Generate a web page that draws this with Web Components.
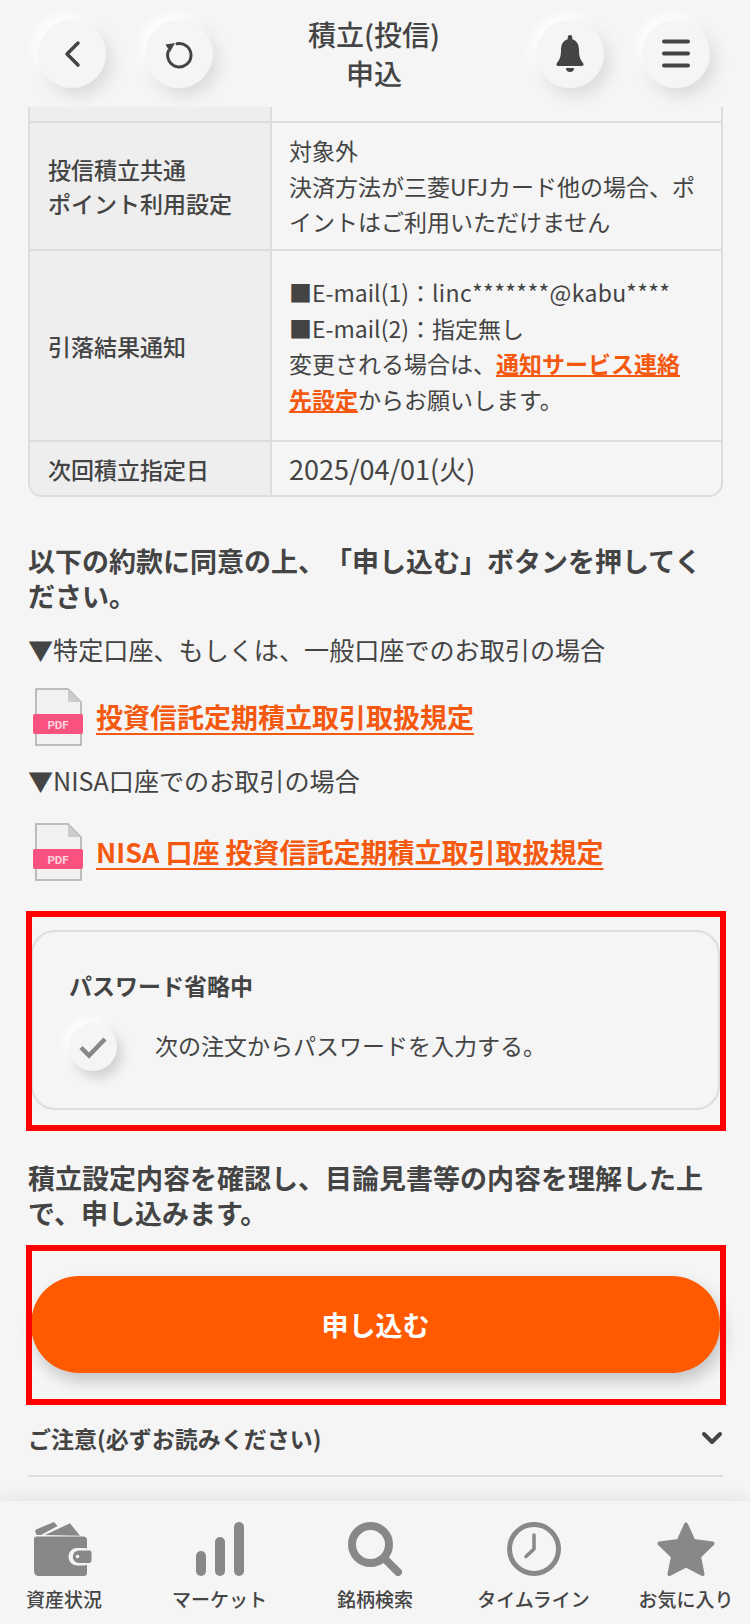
<!DOCTYPE html>
<html lang="ja">
<head>
<meta charset="utf-8">
<title>積立(投信) 申込</title>
<style>
    html, body {
        margin: 0;
        background: #f5f5f5;
    }
    body {
        font-family: "Noto Sans CJK JP", "Noto Sans", sans-serif;
        color: #444;
    }
    a {
        color: #f4590f;
        font-weight: 700;
    }
</style>
</head>
<body>
<app-screen>
    <app-header slot="header">
        <round-button slot="left" icon="back"></round-button>
        <round-button slot="left" icon="reload"></round-button>
        積立(投信)<br>申込
        <round-button slot="right" icon="bell"></round-button>
        <round-button slot="right" icon="menu"></round-button>
    </app-header>

    <info-table>
        <info-row stub></info-row>
        <info-row label="投信積立共通&#10;ポイント利用設定" height="128">
            対象外<br>決済方法が三菱UFJカード他の場合、ポイントはご利用いただけません
        </info-row>
        <info-row label="引落結果通知" height="191">
            ■E-mail(1)：<span style="letter-spacing:.35px">linc*******@kabu****</span><br>■E-mail(2)：指定無し<br>変更される場合は、<a href="#">通知サービス連絡先設定</a>からお願いします。
        </info-row>
        <info-row label="次回積立指定日" height="55" large>2025/04/01(火)</info-row>
    </info-table>

    <agree-text top="46">以下の約款に同意の上、「申し込む」ボタンを押してください。</agree-text>
    <plain-text top="18">▼特定口座、もしくは、一般口座でのお取引の場合</plain-text>
    <pdf-link top="21">投資信託定期積立取引取扱規定</pdf-link>
    <plain-text top="16">▼NISA口座でのお取引の場合</plain-text>
    <pdf-link top="25">NISA 口座 投資信託定期積立取引取扱規定</pdf-link>

    <red-frame top="30">
        <password-card></password-card>
    </red-frame>

    <agree-text top="29">積立設定内容を確認し、目論見書等の内容を理解した上で、申し込みます。</agree-text>

    <red-frame top="15">
        <submit-button>申し込む</submit-button>
    </red-frame>

    <notice-row>ご注意(必ずお読みください)</notice-row>

    <tab-bar slot="footer">
        <tab-item icon="wallet">資産状況</tab-item>
        <tab-item icon="chart">マーケット</tab-item>
        <tab-item icon="search">銘柄検索</tab-item>
        <tab-item icon="clock" style="padding-left:6px">タイムライン</tab-item>
        <tab-item icon="star">お気に入り</tab-item>
    </tab-bar>
</app-screen>

<script>
const ICONS = {
    back: `<svg width="18" height="28" viewBox="0 0 18 28"><path d="M15 3 4 14l11 11" fill="none" stroke="#444" stroke-width="3.5" stroke-linecap="round" stroke-linejoin="round"/></svg>`,
    reload: `<svg width="30" height="30" viewBox="0 0 30 30"><path d="M13 4.700A11.700 11.700 0 1 1 4.400 12" fill="none" stroke="#444" stroke-width="3" stroke-linecap="round"/><path d="M1.500 5.500 11 4 6 13z" fill="#444"/></svg>`,
    bell: `<svg width="30" height="38" viewBox="0 0 30 38"><path d="M15 0a2.300 2.300 0 0 1 2.300 2.300v1.900C22.600 5.700 24 10.500 24 15c0 7 1.500 10 4.200 13.300.9 1.200.2 2.700-1.200 2.700H3c-1.400 0-2.100-1.500-1.200-2.700C4.500 25 6 22 6 15c0-4.500 1.400-9.300 6.700-10.800V2.300A2.300 2.300 0 0 1 15 0z" fill="#444"/><path d="M11 33h8a4 4 0 0 1-8 0z" fill="#444"/></svg>`,
    menu: `<svg width="28" height="29" viewBox="0 0 28 29"><path d="M2 2.500h24M2 14.500h24M2 26.500h24" stroke="#444" stroke-width="4" stroke-linecap="round"/></svg>`,
    wallet: `<svg width="62" height="54" viewBox="0 0 62 54"><g fill="#888"><path d="M3 7.500 21 0l3.500 4L8 13H5C2.500 13 1.500 8.500 3 7.500z"/><path d="M12 13 37 1.300 47 13.700z"/><path d="M1 17c0-1.500 1-2.500 2.500-2.500h47C52.500 14.500 54 16 54 18v33c0 2-1.500 3-3 3H6c-3 0-5-2-5-5z"/></g><rect x="35.500" y="26" width="24" height="17.500" rx="8.500" fill="#f5f5f5"/><path d="M46 28.500h10.500c1.500 0 2 1 2 2.500v7c0 2-1 3-2.500 3H46a6.250 6.250 0 0 1 0-12.500z" fill="#888"/><circle cx="44.500" cy="34.500" r="1.800" fill="#f5f5f5"/></svg>`,
    chart: `<svg width="48" height="54" viewBox="0 0 48 54"><g fill="#888"><rect x="0" y="29" width="10" height="25" rx="5"/><rect x="19" y="15" width="10" height="39" rx="5"/><rect x="38" y="0" width="10" height="54" rx="5"/></g></svg>`,
    search: `<svg width="54" height="54" viewBox="0 0 54 54"><circle cx="22.500" cy="22.500" r="18.500" fill="none" stroke="#888" stroke-width="8"/><path d="M37 37 50 50" stroke="#888" stroke-width="8" stroke-linecap="round"/></svg>`,
    clock: `<svg width="54" height="54" viewBox="0 0 54 54"><circle cx="27" cy="27" r="24.500" fill="none" stroke="#888" stroke-width="5"/><path d="M27 13v14l-8 7.500" fill="none" stroke="#888" stroke-width="3.500" stroke-linecap="round" stroke-linejoin="round"/></svg>`,
    star: `<svg width="58" height="54" viewBox="0 0 58 54"><path d="M29 2.500 36.500 19 55.500 21.500 42 34.500 45.500 52 29 43.500 12.500 52 16 34.500 2.500 21.500 21.500 19z" fill="#888" stroke="#888" stroke-width="4" stroke-linejoin="round"/></svg>`,
};

// small helper, every element below does the same thing in its constructor
const shadow = (el, html) => {
    el.attachShadow({ mode: "open" }).innerHTML = html;
};

class AppScreen extends HTMLElement {
    constructor() {
        super();
        shadow(this, `
            <style>
                :host { display: flex; flex-direction: column; width: 750px; height: 1624px; overflow: hidden; }
                main { flex: 1; min-height: 0; overflow: hidden; padding: 0 27px 0 28px; }
            </style>
            <slot name="header"></slot>
            <main><slot></slot></main>
            <slot name="footer"></slot>`);
    }
}

class AppHeader extends HTMLElement {
    constructor() {
        super();
        shadow(this, `
            <style>
                :host { display: flex; align-items: center; height: 107px; box-sizing: border-box; padding: 0 40px 0 38px; flex: none; }
                .side { display: flex; gap: 39px; width: 175px; }
                .right { justify-content: flex-end; gap: 38px; }
                .title { flex: 1; text-align: center; font-size: 28px; font-weight: 500; line-height: 39px; color: #444; }
            </style>
            <div class="side"><slot name="left"></slot></div>
            <div class="title"><slot></slot></div>
            <div class="side right"><slot name="right"></slot></div>`);
    }
}

class RoundButton extends HTMLElement {
    constructor() {
        super();
        shadow(this, `
            <style>
                :host { display: grid; place-items: center; width: 68px; height: 68px; border-radius: 50%; background: #f5f5f5;
                    box-shadow: 6px 8px 16px rgba(0,0,0,.1), -5px -5px 12px #fff; }
                svg { display: block; }
            </style>
            ${ICONS[this.getAttribute("icon")]}`);
    }
}

class InfoTable extends HTMLElement {
    constructor() {
        super();
        shadow(this, `
            <style>
                :host { display: block; border: 2px solid #ddd; border-top: 0; border-radius: 0 0 14px 14px; overflow: hidden; }
            </style>
            <slot></slot>`);
    }
}

class InfoRow extends HTMLElement {
    constructor() {
        super();
        const label = this.getAttribute("label") || "";
        const height = this.hasAttribute("stub") ? 14 : this.getAttribute("height");
        shadow(this, `
            <style>
                :host { display: grid; grid-template-columns: 242px 1fr; border-top: 2px solid #ddd; min-height: ${height}px; font-size: 23px; line-height: 35.5px; box-sizing: border-box; }
                :host([stub]) { border-top: 0; }
                :host([large]) .value { font-size: 27px; }
                .label { background: #eee; border-right: 2px solid #ddd; display: flex; align-items: center; padding: 0 0 0 18px; font-weight: 500; white-space: pre-line; line-height: 34px; }
                .value { display: flex; align-items: center; padding: 1px 22px 0 17px; }
                ::slotted(a) { color: #f4590f; font-weight: 700; }
            </style>
            <div class="label">${label}</div>
            <div class="value"><div><slot></slot></div></div>`);
    }
}

class AgreeText extends HTMLElement {
    constructor() {
        super();
        shadow(this, `
            <style>
                :host { display: block; margin-top: ${this.getAttribute("top")}px; font-size: 27px; font-weight: 700; line-height: 35px; color: #444; text-spacing-trim: space-all; }
            </style>
            <slot></slot>`);
    }
}

class PlainText extends HTMLElement {
    constructor() {
        super();
        shadow(this, `
            <style>
                :host { display: block; margin-top: ${this.getAttribute("top")}px; font-size: 25.1px; line-height: 36px; color: #444; }
            </style>
            <slot></slot>`);
    }
}

class PdfLink extends HTMLElement {
    constructor() {
        super();
        shadow(this, `
            <style>
                :host { display: flex; align-items: center; gap: 12px; margin-top: ${this.getAttribute("top")}px; padding-left: 4px; height: 58px; }
                a { color: #f4590f; font-size: 27px; font-weight: 700; text-decoration: underline; text-decoration-thickness: 2px; text-underline-offset: 5px; line-height: 36px; }
                svg { display: block; flex: none; }
            </style>
            <svg width="52" height="58" viewBox="0 0 52 58">
                <path d="M4 1h32l13 13v43H4z" fill="#f1f1f1" stroke="#aaa" stroke-width="1.500"/>
                <path d="M36 1v13h13z" fill="#ccc"/>
                <rect x="1" y="26" width="50" height="20" rx="2" fill="#f9527f"/>
                <text x="26" y="41" text-anchor="middle" font-family="Roboto, sans-serif" font-size="11.500" font-weight="700" fill="#fbd5df">PDF</text>
            </svg>
            <a href="#"><slot></slot></a>`);
    }
}

class RedFrame extends HTMLElement {
    constructor() {
        super();
        shadow(this, `
            <style>
                :host { display: flow-root; position: relative; margin: ${this.getAttribute("top")}px -3px 0 -2px; padding: 0 6px; box-sizing: border-box; }
                :host::after { content: ""; position: absolute; inset: 0; border: 6px solid #f00; pointer-events: none; }
            </style>
            <slot></slot>`);
    }
}

class PasswordCard extends HTMLElement {
    constructor() {
        super();
        shadow(this, `
            <style>
                :host { display: block; border: 2px solid #ddd; border-radius: 24px; height: 180px; box-sizing: border-box; padding: 36px 36px 0; color: #444; margin: 19px 0 21px -1px; }
                h3 { margin: 0; font-size: 23px; font-weight: 700; line-height: 34px; }
                .line { display: flex; align-items: center; margin-top: 21px; font-size: 23px; }
                .line span { margin-top: -4px; }
                .check { display: grid; place-items: center; width: 48px; height: 48px; border-radius: 50%; background: #f5f5f5; margin-right: 38px;
                    box-shadow: 5px 7px 12px rgba(0,0,0,.15), -4px -4px 8px #fff; }
                svg { display: block; }
            </style>
            <h3>パスワード省略中</h3>
            <div class="line">
                <div class="check"><svg width="30" height="24" viewBox="0 0 30 24"><path d="M3 12.500l8 8L27 4" fill="none" stroke="#888" stroke-width="4.500"/></svg></div>
                <span>次の注文からパスワードを入力する。</span>
            </div>`);
    }
}

class SubmitButton extends HTMLElement {
    constructor() {
        super();
        shadow(this, `
            <style>
                :host { display: grid; place-items: center; height: 97px; margin: 31px 0 32px -1px; border-radius: 48px; background: #ff5a00; color: #fff; font-size: 27px; font-weight: 700;
                    box-shadow: 4px 8px 16px rgba(0,0,0,.2); }
            </style>
            <slot></slot>`);
    }
}

class NoticeRow extends HTMLElement {
    constructor() {
        super();
        shadow(this, `
            <style>
                :host { display: flex; align-items: center; justify-content: space-between; height: 72px; border-bottom: 2px solid #ddd; padding-bottom: 4px; font-size: 23px; font-weight: 700; color: #444; box-sizing: border-box; padding-right: 1px; }
                svg { display: block; }
            </style>
            <slot></slot>
            <svg width="20" height="14" viewBox="0 0 20 14"><path d="M2 3l8 8 8-8" fill="none" stroke="#444" stroke-width="4" stroke-linecap="round" stroke-linejoin="round"/></svg>`);
    }
}

class TabBar extends HTMLElement {
    constructor() {
        super();
        shadow(this, `
            <style>
                :host { display: grid; grid-template-columns: repeat(5, 155.5px); justify-content: center; flex: none; height: 123px; box-sizing: border-box; padding: 21px 0 0; background: #f5f5f5; box-shadow: 0 -6px 14px rgba(0,0,0,.06); position: relative; }
            </style>
            <slot></slot>`);
    }
}

class TabItem extends HTMLElement {
    constructor() {
        super();
        shadow(this, `
            <style>
                :host { display: flex; flex-direction: column; align-items: center; font-size: 19px; font-weight: 500; color: #444; line-height: 28px; }
                .icon { height: 54px; margin-bottom: 9px; }
                svg { display: block; }
            </style>
            <div class="icon">${ICONS[this.getAttribute("icon")]}</div>
            <slot></slot>`);
    }
}

customElements.define("app-screen", AppScreen);
customElements.define("app-header", AppHeader);
customElements.define("round-button", RoundButton);
customElements.define("info-table", InfoTable);
customElements.define("info-row", InfoRow);
customElements.define("agree-text", AgreeText);
customElements.define("plain-text", PlainText);
customElements.define("pdf-link", PdfLink);
customElements.define("red-frame", RedFrame);
customElements.define("password-card", PasswordCard);
customElements.define("submit-button", SubmitButton);
customElements.define("notice-row", NoticeRow);
customElements.define("tab-bar", TabBar);
customElements.define("tab-item", TabItem);
</script>
</body>
</html>
